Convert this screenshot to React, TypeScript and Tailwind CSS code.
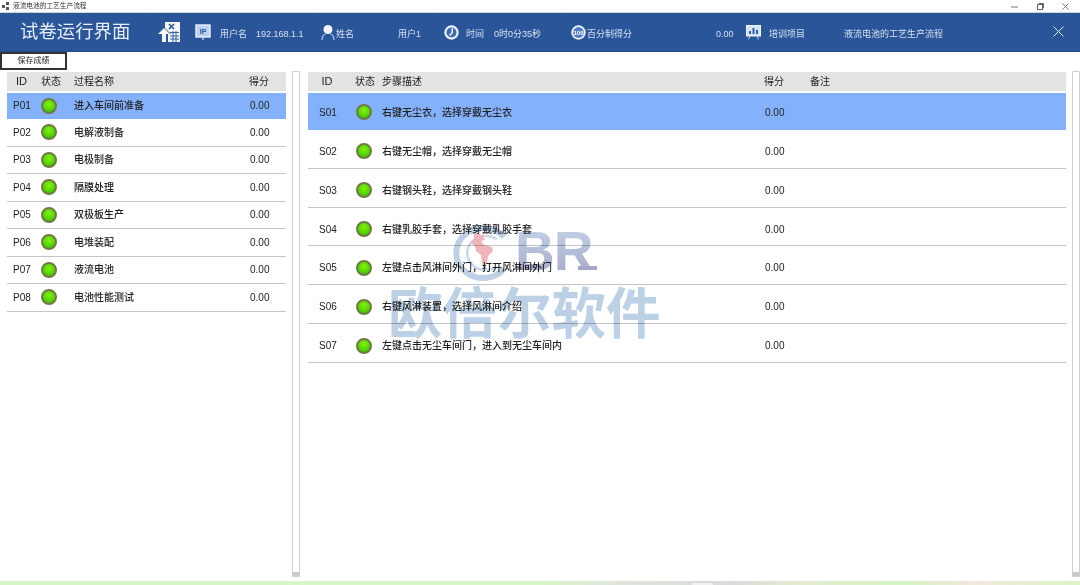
const processes = [
  { id: 'P01', name: '进入车间前准备', score: '0.00' },
  { id: 'P02', name: '电解液制备', score: '0.00' },
  { id: 'P03', name: '电极制备', score: '0.00' },
  { id: 'P04', name: '隔膜处理', score: '0.00' },
  { id: 'P05', name: '双极板生产', score: '0.00' },
  { id: 'P06', name: '电堆装配', score: '0.00' },
  { id: 'P07', name: '液流电池', score: '0.00' },
  { id: 'P08', name: '电池性能测试', score: '0.00' },
]

const steps = [
  { id: 'S01', desc: '右键无尘衣，选择穿戴无尘衣', score: '0.00' },
  { id: 'S02', desc: '右键无尘帽，选择穿戴无尘帽', score: '0.00' },
  { id: 'S03', desc: '右键钢头鞋，选择穿戴钢头鞋', score: '0.00' },
  { id: 'S04', desc: '右键乳胶手套，选择穿戴乳胶手套', score: '0.00' },
  { id: 'S05', desc: '左键点击风淋间外门，打开风淋间外门', score: '0.00' },
  { id: 'S06', desc: '右键风淋装置，选择风淋间介绍', score: '0.00' },
  { id: 'S07', desc: '左键点击无尘车间门，进入到无尘车间内', score: '0.00' },
]

function Led() {
  return (
    <span className="block h-4 w-4 rounded-full border-[2px] border-[#6f7a45] bg-[radial-gradient(circle_at_50%_35%,#84f010_0%,#55d804_55%,#36a806_100%)]" />
  )
}

function Scrollbar() {
  return (
    <div className="flex w-2 shrink-0 flex-col justify-end rounded-t-[1px] border border-[#cfcfcf] bg-white">
      <div className="h-[4px] bg-[#c9c9c9]" />
    </div>
  )
}

function HeaderIcons({ kind }: { kind: string }) {
  if (kind === 'sheet') {
    return (
      <svg width="22" height="20" viewBox="0 0 22 20" fill="#f3f6fb">
        <path d="M7 0h15v20H10v-8l3 0-6-6z" />
        <path d="M0 12l6-6 6 6H8v8H4v-8z" />
        <path d="M11 2l5 5M16 2l-5 5" stroke="#2a5599" strokeWidth="1.6" />
        <path d="M12 10.5h9M12 14h9M12 17h9M15 9v11M18 9v11" stroke="#2a5599" strokeWidth="0.9" />
      </svg>
    )
  }
  if (kind === 'ip') {
    return (
      <svg width="16" height="17" viewBox="0 0 16 17">
        <rect x="1" y="1" width="14" height="12" fill="#b9d2f3" stroke="#e8f0fb" strokeWidth="1.4" />
        <path d="M8 13v3" stroke="#dce8f8" strokeWidth="1.2" />
        <text x="8" y="10" textAnchor="middle" fontSize="7" fontWeight="700" fill="#2a5599" fontFamily="'Liberation Sans', sans-serif">IP</text>
      </svg>
    )
  }
  if (kind === 'user') {
    return (
      <svg width="14" height="17" viewBox="0 0 14 17" fill="none">
        <circle cx="7" cy="5.5" r="4.5" fill="#f2f6fd" />
        <path d="M1 16c0-3.5 2-5.5 3.5-6M13 16c0-3.5-2-5.5-3.5-6" stroke="#a9c6ee" strokeWidth="1.3" />
      </svg>
    )
  }
  if (kind === 'clock') {
    return (
      <svg width="15" height="15" viewBox="0 0 15 15">
        <circle cx="7.5" cy="7.5" r="7.2" fill="#edf3fc" />
        <circle cx="7.5" cy="7.5" r="5" fill="#3f6cb4" />
        <path d="M8.2 3.2v4.6L5.6 10.4" stroke="#fff" strokeWidth="1.4" fill="none" />
      </svg>
    )
  }
  if (kind === 'hundred') {
    return (
      <svg width="15" height="15" viewBox="0 0 15 15">
        <circle cx="7.5" cy="7.5" r="7.2" fill="#edf3fc" />
        <circle cx="7.5" cy="7.5" r="5.4" fill="#4f7dc4" />
        <text x="7.5" y="9.6" textAnchor="middle" fontSize="6" fontWeight="700" fill="#fff" fontFamily="'Liberation Sans', sans-serif">100</text>
      </svg>
    )
  }
  return (
    <svg width="15" height="15" viewBox="0 0 15 15">
      <rect x="0.5" y="0.5" width="14" height="10.5" fill="#d4e3f7" stroke="#eef4fc" />
      <path d="M3 9V6h2v3zM6.5 9V3h2v6zM10 9V5h2v4z" fill="#2f62ad" />
      <path d="M4 11l-1.5 3.5M11 11l1.5 3.5" stroke="#b9d2f3" strokeWidth="1" />
    </svg>
  )
}

function HeaderSep() {
  return <div className="h-[34px] w-px shrink-0 bg-[#2c599e]" />
}

function Watermark() {
  return (
    <div className="pointer-events-none absolute left-[388px] top-[225px] h-[118px] w-[274px] mix-blend-multiply">
      <svg className="absolute left-[62px] top-0" width="66" height="56" viewBox="0 0 66 56" fill="none">
        <path d="M54 12A27 25 0 1 0 54 44" stroke="#bdd0e6" strokeWidth="6" />
        <path d="M47 14A19 17 0 1 0 47 42" stroke="#c9d8ea" strokeWidth="2.5" />
        <path d="M24 8l9 2 2 5-4 1 3 4 8 2 1 4-5 5-1 6-3 7-2-7-1-7-5-4-1-5-4-3 3-5z" fill="#eeb4b8" />
      </svg>
      <div className="absolute left-[127px] top-0 bg-gradient-to-b from-[#c2d4e9] to-[#a6a8c8] bg-clip-text text-[55px] font-bold leading-[52px] tracking-[-1px] text-transparent [font-family:'Liberation_Sans',sans-serif]">
        BR
      </div>
      <div className="absolute left-[190px] top-[41px] h-[4px] w-[19px] bg-[#a6a8c8]" />
      <div className="absolute left-0 top-[62px] whitespace-nowrap text-[54.5px] font-bold leading-[56px] text-[#bcd0e6]">
        欧倍尔软件
      </div>
    </div>
  )
}

export default function App() {
  return (
    <div
      className="relative flex h-[585px] w-[1080px] flex-col overflow-hidden bg-white text-[10px] text-[#222] blur-[0.3px]"
      style={{ fontFamily: "'Liberation Sans', 'Noto Sans CJK SC', sans-serif" }}
    >
      {/* window title bar */}
      <div className="flex h-[13px] shrink-0 items-center border-b border-[#d5d5d5] bg-white">
        <svg className="ml-[2px] mr-[3px]" width="8" height="8" viewBox="0 0 8 8" fill="#555">
          <rect x="0" y="3" width="3" height="3" />
          <rect x="4" y="0" width="3" height="3" />
          <rect x="4" y="5" width="3" height="3" />
        </svg>
        <span className="text-[6.7px] text-[#333]">液流电池的工艺生产流程</span>
        <div className="ml-auto mr-[11px] flex items-center gap-[18.5px] text-[#666]">
          <svg width="7" height="7" viewBox="0 0 7 7"><path d="M0 4h7" stroke="#777" /></svg>
          <svg width="7" height="7" viewBox="0 0 7 7" fill="none"><rect x="0.5" y="1.5" width="5" height="5" stroke="#666" /><path d="M2 1V.5h4.5V5H6" stroke="#666" /></svg>
          <svg width="7" height="7" viewBox="0 0 7 7"><path d="M.5.5l6 6M6.5.5l-6 6" stroke="#777" /></svg>
        </div>
      </div>

      {/* blue header */}
      <div className="flex h-[39px] shrink-0 items-center border-b border-[#234b8a] bg-[#2a5599] text-[9px] text-[#d5e0f0]">
        <div className="ml-[20px] w-[131px] shrink-0 text-[18.4px] leading-none text-[#e8eef8]">试卷运行界面</div>
        <HeaderSep />
        <div className="ml-[6px] w-[37px] shrink-0"><HeaderIcons kind="sheet" /></div>
        <div className="w-[25px] shrink-0"><HeaderIcons kind="ip" /></div>
        <div className="mt-[6px] w-[36px] shrink-0">用户名</div>
        <div className="mt-[6px] w-[59px] shrink-0">192.168.1.1</div>
        <HeaderSep />
        <div className="ml-[5px] w-[15px] shrink-0"><HeaderIcons kind="user" /></div>
        <div className="mt-[5px] w-[62px] shrink-0">姓名</div>
        <div className="mt-[6px] w-[38px] shrink-0">用户1</div>
        <HeaderSep />
        <div className="ml-[7px] w-[22px] shrink-0"><HeaderIcons kind="clock" /></div>
        <div className="mt-[6px] w-[28px] shrink-0">时间</div>
        <div className="mt-[6px] w-[69px] shrink-0">0时0分35秒</div>
        <HeaderSep />
        <div className="ml-[7px] w-[16px] shrink-0"><HeaderIcons kind="hundred" /></div>
        <div className="mt-[6px] w-[129px] shrink-0">百分制得分</div>
        <div className="mt-[6px] w-[30px] shrink-0">0.00</div>
        <div className="w-[23px] shrink-0"><HeaderIcons kind="chart" /></div>
        <div className="mt-[6px] w-[75px] shrink-0">培训项目</div>
        <div className="mt-[6px] w-[209px] shrink-0">液流电池的工艺生产流程</div>
        <svg width="11" height="11" viewBox="0 0 11 11" className="mt-[-1px]">
          <path d="M.5.5l10 10M10.5.5l-10 10" stroke="#dfe8f5" strokeWidth="1" />
        </svg>
      </div>

      {/* toolbar */}
      <div className="h-[19px] shrink-0">
        <button type="button" className="block h-[17.5px] w-[67px] border-2 border-[#333] bg-white text-center text-[8px] leading-none text-[#222]">
          保存成绩
        </button>
      </div>

      {/* tables */}
      <div className="flex min-h-0 flex-1">
        <div className="ml-[7px] w-[279px] shrink-0 pt-px">
          <div className="flex h-[19px] items-center bg-[#e3e3e3]">
            <div className="w-[29px] text-center text-[11px]">ID</div>
            <div className="ml-[5px] w-[33px]">状态</div>
            <div className="w-[175px]">过程名称</div>
            <div>得分</div>
          </div>
          <div className="mt-[2px]">
            {processes.map((p, i) => (
              <div
                key={p.id}
                className={`flex items-center border-b ${
                  i === 0
                    ? 'h-[26px] border-transparent bg-[#84b1fb]'
                    : 'h-[27.5px] border-[#c4c4c4]'
                }`}
              >
                <div className="ml-[6px] w-[28px]">{p.id}</div>
                <div className="w-[33px]"><Led /></div>
                <div className="w-[176px] font-medium">{p.name}</div>
                <div>{p.score}</div>
              </div>
            ))}
          </div>
        </div>

        <div className="ml-[6px] flex shrink-0 pb-[4px]">
          <Scrollbar />
        </div>

        <div className="ml-[8px] w-[758px] shrink-0 pt-px">
          <div className="flex h-[19px] items-center bg-[#e3e3e3]">
            <div className="w-[38px] text-center text-[11px]">ID</div>
            <div className="ml-[9px] w-[27px]">状态</div>
            <div className="w-[382px]">步骤描述</div>
            <div className="w-[46px]">得分</div>
            <div>备注</div>
          </div>
          <div className="mt-[2px]">
            {steps.map((s, i) => (
              <div
                key={s.id}
                className={`flex items-center border-b ${
                  i === 0
                    ? 'h-[37px] border-transparent bg-[#84b1fb] pt-[2px]'
                    : 'h-[38.83px] border-[#c4c4c4] pt-[5px]'
                }`}
              >
                <div className="ml-[11px] w-[37px]">{s.id}</div>
                <div className="w-[26px]"><Led /></div>
                <div className="w-[383px] font-medium">{s.desc}</div>
                <div>{s.score}</div>
              </div>
            ))}
          </div>
        </div>

        <div className="ml-[6px] flex shrink-0 pb-[4px]">
          <Scrollbar />
        </div>
      </div>

      {/* strip of the next window */}
      <div className="flex h-[4px] shrink-0 justify-start bg-[linear-gradient(to_right,#d6f5c8_0%,#d8f6c6_50%,#dfe6dc_56%,#d9dcd8_68%,#e4ecd0_74%,#d4f3c4_84%,#f2e8dc_90%,#dcf5c8_100%)]">
        <div className="ml-[692px] mt-[2px] h-[2px] w-[21px] bg-[#f0f0f0]" />
      </div>

      <Watermark />
    </div>
  )
}
